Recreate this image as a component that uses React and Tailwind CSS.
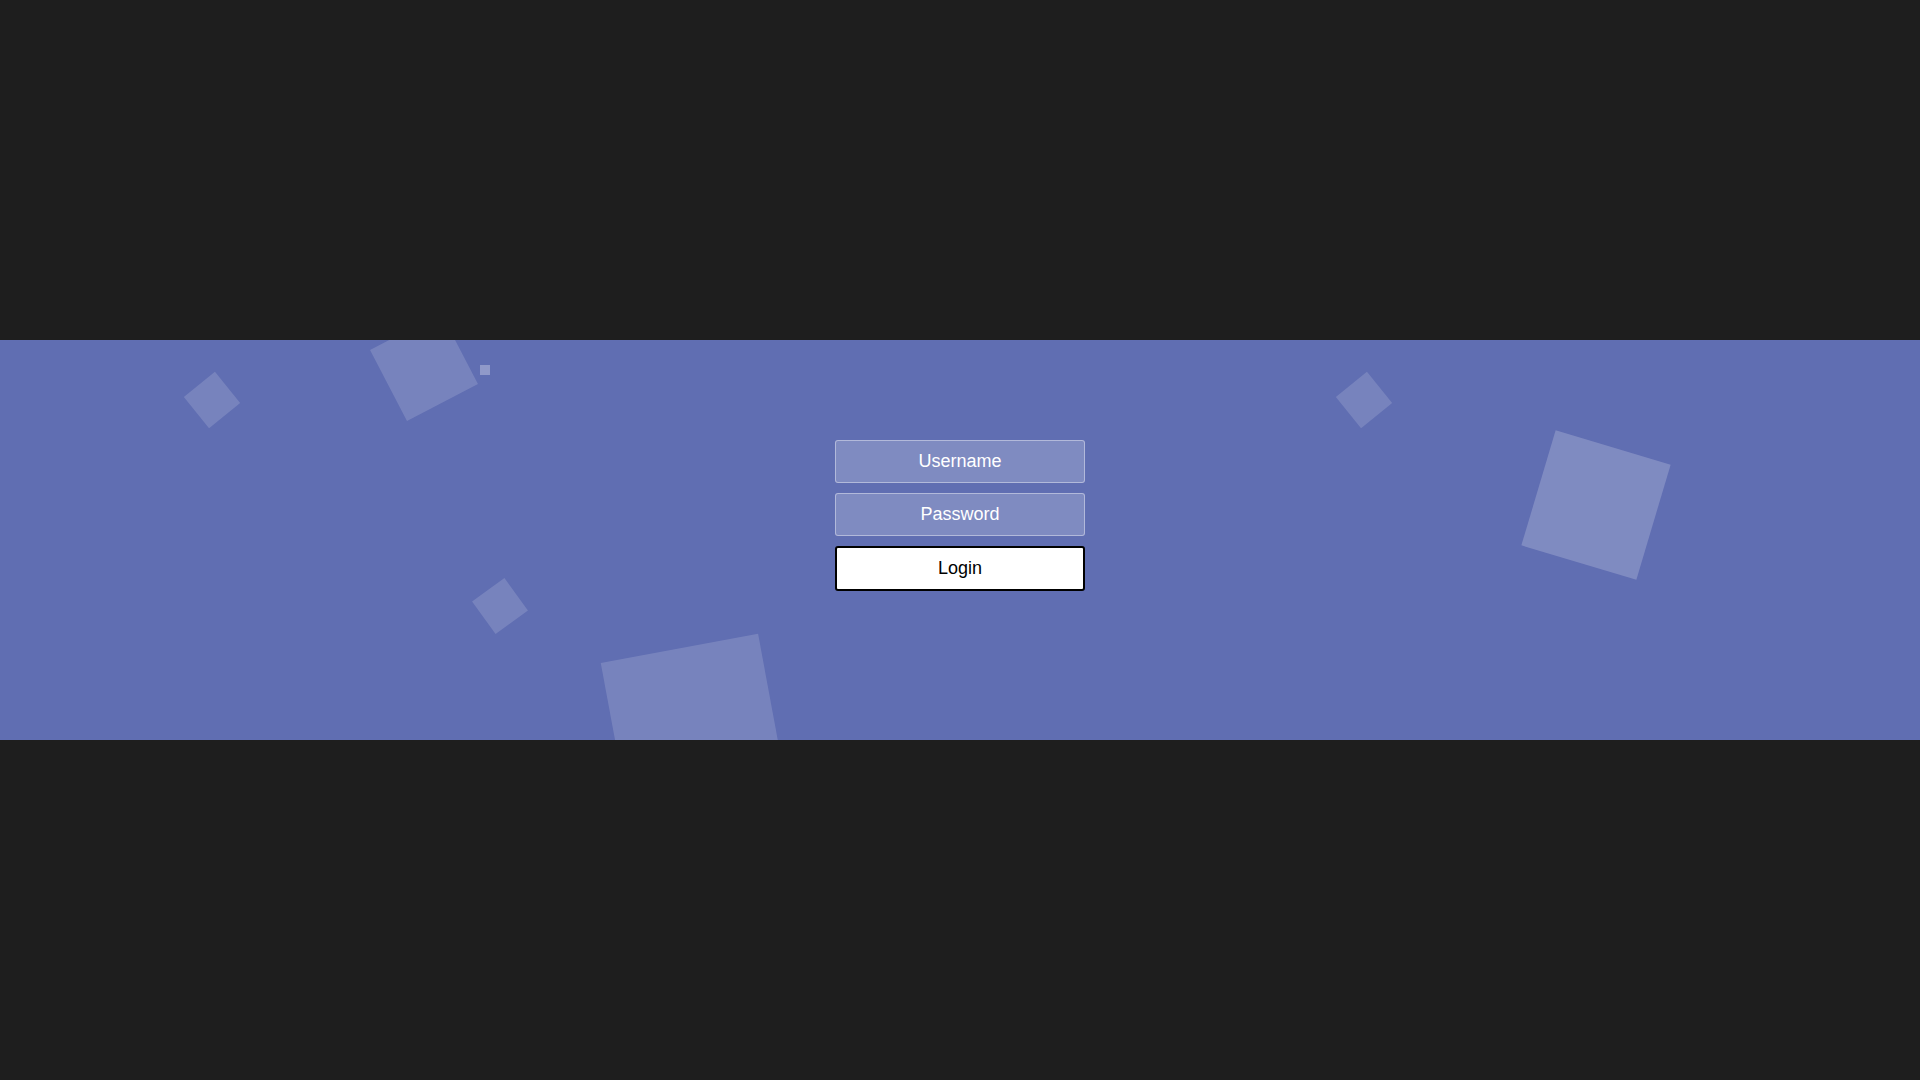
import { useState } from 'react'

// background squares, frozen mid-animation
const SQUARES = [
  { id: 1, className: 'left-[192px] top-[40px] w-[40px] h-[40px] rotate-[51deg] bg-white/15' },
  { id: 2, className: 'left-[384px] top-[-13px] w-[80px] h-[80px] rotate-[62.5deg] bg-white/15' },
  { id: 3, className: 'left-[480px] top-[246px] w-[40px] h-[40px] rotate-[54deg] bg-white/15' },
  { id: 5, className: 'left-[1344px] top-[40px] w-[40px] h-[40px] rotate-[51deg] bg-white/15' },
  { id: 6, className: 'left-[1536px] top-[105px] w-[120px] h-[120px] rotate-[16.6deg] bg-white/20' },
  { id: 7, className: 'left-[614px] top-[307px] w-[160px] h-[160px] rotate-[-10.5deg] bg-white/15' },
  { id: 9, className: 'left-[480px] top-[25px] w-[10px] h-[10px] bg-white/30' },
]

export default function App() {
  const [username, setUsername] = useState('')
  const [password, setPassword] = useState('')

  const handleSubmit = (e) => {
    e.preventDefault()
  }

  return (
    <div className="min-h-screen bg-[#1e1e1e] flex items-center font-['Liberation_Sans',Arial,sans-serif]">
      <div className="relative w-full h-[400px] overflow-hidden bg-[#606eb2]">
        <ul>
          {SQUARES.map((s) => (
            <li key={s.id} className={`absolute list-none ${s.className}`} />
          ))}
        </ul>

        <form
          onSubmit={handleSubmit}
          className="relative z-10 flex flex-col items-center gap-[10px] pt-[100px]"
        >
          <input
            type="text"
            placeholder="Username"
            value={username}
            onChange={(e) => setUsername(e.target.value)}
            className="w-[250px] h-[43px] px-[15px] rounded-[3px] border border-white/40 bg-white/20 text-center text-[18px] text-white placeholder:text-white outline-none"
          />
          <input
            type="password"
            placeholder="Password"
            value={password}
            onChange={(e) => setPassword(e.target.value)}
            className="w-[250px] h-[43px] px-[15px] rounded-[3px] border border-white/40 bg-white/20 text-center text-[18px] text-white placeholder:text-white outline-none"
          />
          <button
            type="submit"
            className="w-[250px] h-[45px] px-[15px] rounded-[3px] border-2 border-black bg-white text-[18px] text-black"
          >
            Login
          </button>
        </form>
      </div>
    </div>
  )
}
